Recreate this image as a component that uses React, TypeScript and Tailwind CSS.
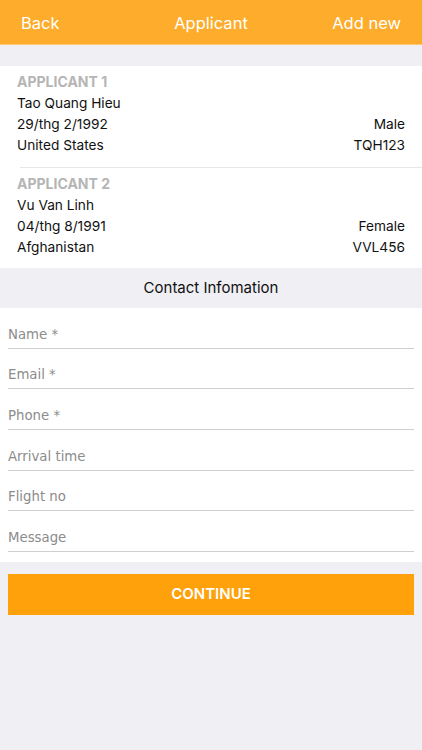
import React from "react";

const Field = ({ label }: { label: string }) => (
  <div className="h-[40.7px] flex flex-col justify-end">
    <div
      className="text-[13.3px] leading-[18px] text-[#8c8c8c] pb-[4px]"
      style={{ fontFamily: '"DejaVu Sans", sans-serif' }}
    >
      {label}
    </div>
    <div className="h-px bg-[#cfcfcf]" />
  </div>
);

const Applicant = ({
  title,
  name,
  dob,
  gender,
  country,
  code,
}: {
  title: string;
  name: string;
  dob: string;
  gender: string;
  country: string;
  code: string;
}) => (
  <div className="pl-[17px] pr-[17px] text-[13.7px] text-[#111] leading-[21px]">
    <div className="font-bold text-[#b5b5b5] text-[14px] leading-[22px]">{title}</div>
    <div>{name}</div>
    <div className="flex justify-between">
      <span>{dob}</span>
      <span>{gender}</span>
    </div>
    <div className="flex justify-between">
      <span>{country}</span>
      <span>{code}</span>
    </div>
  </div>
);

export default function App() {
  return (
    <div
      className="w-[422px] h-[750px] bg-[#efeff4] flex flex-col"
      style={{ fontFamily: 'Inter, "Liberation Sans", sans-serif' }}
    >
      <div className="h-[45px] bg-[#fdac2b] border-b border-[#fcc877] flex items-center pt-[2px] px-[21px] text-white text-[16.5px]">
        <span className="flex-1">Back</span>
        <span>Applicant</span>
        <span className="flex-1 text-right">Add new</span>
      </div>
      <div className="h-[21px]" />
      <div className="bg-white pt-[5px] pb-[10.5px]">
        <Applicant
          title="APPLICANT 1"
          name="Tao Quang Hieu"
          dob="29/thg 2/1992"
          gender="Male"
          country="United States"
          code="TQH123"
        />
        <div className="ml-[20px] h-px bg-[#e6e6e6] mt-[10.5px] mb-[5px]" />
        <Applicant
          title="APPLICANT 2"
          name="Vu Van Linh"
          dob="04/thg 8/1991"
          gender="Female"
          country="Afghanistan"
          code="VVL456"
        />
      </div>
      <div className="h-[40px] flex items-center justify-center text-[15px] text-[#111]">
        Contact Infomation
      </div>
      <div className="bg-white px-[8px] pb-[10px]">
        <Field label="Name *" />
        <Field label="Email *" />
        <Field label="Phone *" />
        <Field label="Arrival time" />
        <Field label="Flight no" />
        <Field label="Message" />
      </div>
      <div className="px-[8px] pt-[12px]">
        <div className="h-[41px] bg-[#ffa10a] flex items-center justify-center text-white font-semibold text-[15px]">
          CONTINUE
        </div>
      </div>
    </div>
  );
}
